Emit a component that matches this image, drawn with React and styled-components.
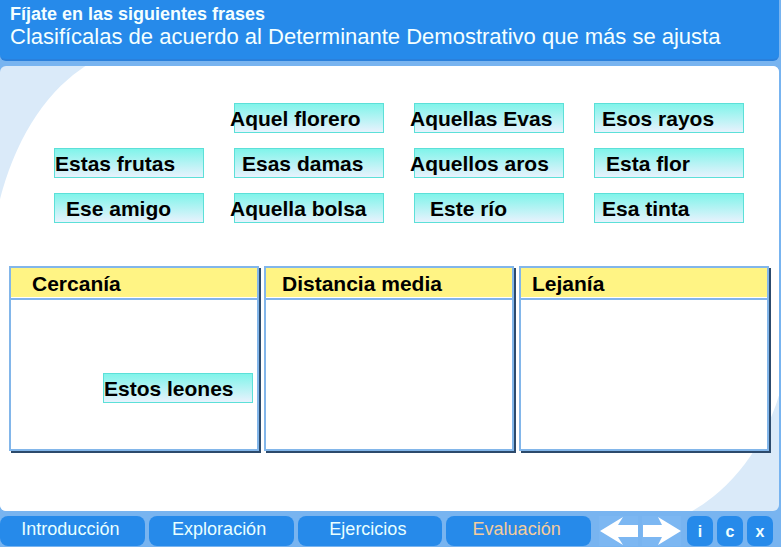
import React from "react";
import styled, { createGlobalStyle } from "styled-components";

const GlobalStyle = createGlobalStyle`
  *, *::before, *::after { box-sizing: border-box; }
  body {
    margin: 0;
    background: #78b4f0;
    font-family: "Liberation Sans", Arial, sans-serif;
  }
  h1, h2, p, ul { margin: 0; padding: 0; }
`;

const Page = styled.div`
  min-height: 100vh;
  display: flex;
  flex-direction: column;
`;

const Header = styled.header`
  margin-right: 2px;
  height: 61px;
  padding: 4px 10px;
  color: #f4ffff;
  background: #268aea;
  border-bottom: 2px solid #2a80dc;
  border-radius: 0 0 6px 6px;
`;

const Title = styled.h1`
  font-size: 18px;
  line-height: 20px;
`;

const Instruction = styled.p`
  font-size: 22px;
  line-height: 26px;
`;

const Stage = styled.main`
  position: relative;
  z-index: 0;
  flex: 1;
  margin: 5px 2px 0 0;
  padding: 37px 10px 60px 9px;
  overflow: hidden;
  background: #daeaf9;
  border-radius: 6px;

  &::before {
    content: "";
    position: absolute;
    z-index: -1;
    inset: -20px -10px -20px -10px;
    background: #fff;
    border-radius: 160px 0 170px 0 / 235px 0 205px 0;
  }
`;

const Phrases = styled.div`
  display: grid;
  grid-template-columns: repeat(4, 1fr);
  gap: 15px 30px;
  padding: 0 25px 0 45px;
`;

const Phrase = styled.button`
  height: 30px;
  padding: 2px 0 0;
  border: 1px solid #5ce0d8;
  background: linear-gradient(#80f4ea, #e8f2fd);
  color: #000;
  font: bold 21px/26px "Liberation Sans", Arial, sans-serif;
  text-align: left;
  text-indent: ${(p) => p.$indent}px;
  white-space: nowrap;
  cursor: grab;

  &:first-child { grid-column-start: ${(p) => p.$column || "auto"}; }
`;

const Groups = styled.div`
  display: grid;
  grid-template-columns: repeat(3, 1fr);
  gap: 5px;
  margin-top: 43px;
`;

const Group = styled.section`
  height: 185px;
  border: 2px solid #82b6ea;
  background: #fff;
  box-shadow: 2px 2px 0 #2c4a6c;
`;

const GroupTitle = styled.h2`
  height: 32px;
  padding-left: ${(p) => p.$inset}px;
  background: #fff484;
  border-bottom: 2px solid #82b4ec;
  box-shadow: inset 0 -1px #fff;
  font-size: 21px;
  line-height: 31px;
`;

const DropArea = styled.div`
  display: flex;
  flex-direction: column;
  align-items: flex-end;
  padding: 73px 4px 0 0;

  ${Phrase} { width: 150px; }
`;

const Footer = styled.footer`
  display: flex;
  align-items: center;
  padding: 5px 8px 1px 0;
`;

const Tabs = styled.nav`
  flex: 1;
  display: grid;
  grid-template-columns: repeat(4, 1fr);
  gap: 4px;
`;

const Tab = styled.button`
  height: 30px;
  padding: 0 4px 4px 0;
  border: 0;
  border-radius: 8px;
  background: #268aea;
  color: ${(p) => (p.$current ? "#f4cc9c" : "#e8ffff")};
  font: 18px/22px "Liberation Sans", Arial, sans-serif;
`;

const Arrows = styled.div`
  display: flex;
  gap: 4px;
  margin: 0 6px 0 8px;
`;

const ArrowButton = styled.button`
  display: block;
  width: 39px;
  height: 30px;
  padding: 0;
  border: 0;
  background: #7cb7f2;

  svg { display: block; }
`;

const Tools = styled.div`
  display: flex;
  gap: 4px;
`;

const Tool = styled.button`
  width: 26px;
  height: 30px;
  padding: 2px 0 0;
  border: 0;
  border-radius: 7px;
  background: #268aea;
  color: #f0ffff;
  font: bold 16px/20px "Liberation Sans", Arial, sans-serif;
`;

const phrases = [
  ["Aquel florero", -5, 2],
  ["Aquellas Evas", -5],
  ["Esos rayos", 7],
  ["Estas frutas", 0],
  ["Esas damas", 7],
  ["Aquellos aros", -5],
  ["Esta flor", 11],
  ["Ese amigo", 11],
  ["Aquella bolsa", -5],
  ["Este río", 15],
  ["Esa tinta", 7],
];

const groups = [
  { name: "Cercanía", inset: 21, placed: ["Estos leones"] },
  { name: "Distancia media", inset: 16, placed: [] },
  { name: "Lejanía", inset: 11, placed: [] },
];

const tabs = ["Introducción", "Exploración", "Ejercicios", "Evaluación"];

const tools = [
  ["i", "Información"],
  ["c", "Créditos"],
  ["x", "Cerrar"],
];

function Arrow({ label, points }) {
  return (
    <ArrowButton type="button" aria-label={label}>
      <svg width="39" height="30" viewBox="0 0 39 30" aria-hidden="true">
        <polygon points={points} fill="#fff" />
      </svg>
    </ArrowButton>
  );
}

export default function App() {
  return (
    <Page>
      <GlobalStyle />
      <Header>
        <Title>Fíjate en las siguientes frases</Title>
        <Instruction>
          Clasifícalas de acuerdo al Determinante Demostrativo que más se ajusta
        </Instruction>
      </Header>
      <Stage>
        <Phrases>
          {phrases.map(([text, indent, column]) => (
            <Phrase key={text} type="button" $indent={indent} $column={column}>
              {text}
            </Phrase>
          ))}
        </Phrases>
        <Groups>
          {groups.map(({ name, inset, placed }) => (
            <Group key={name} aria-label={name}>
              <GroupTitle $inset={inset}>{name}</GroupTitle>
              <DropArea>
                {placed.map((text) => (
                  <Phrase key={text} type="button" $indent={0}>
                    {text}
                  </Phrase>
                ))}
              </DropArea>
            </Group>
          ))}
        </Groups>
      </Stage>
      <Footer>
        <Tabs>
          {tabs.map((name) => (
            <Tab key={name} type="button" $current={name === "Evaluación"}>
              {name}
            </Tab>
          ))}
        </Tabs>
        <Arrows>
          <Arrow label="Anterior" points="1,15 24,1 19,9 39,9 39,21 19,21 24,29" />
          <Arrow label="Siguiente" points="39,15 16,1 20,9 1,9 1,21 20,21 16,29" />
        </Arrows>
        <Tools>
          {tools.map(([letter, label]) => (
            <Tool key={letter} type="button" aria-label={label}>
              {letter}
            </Tool>
          ))}
        </Tools>
      </Footer>
    </Page>
  );
}
